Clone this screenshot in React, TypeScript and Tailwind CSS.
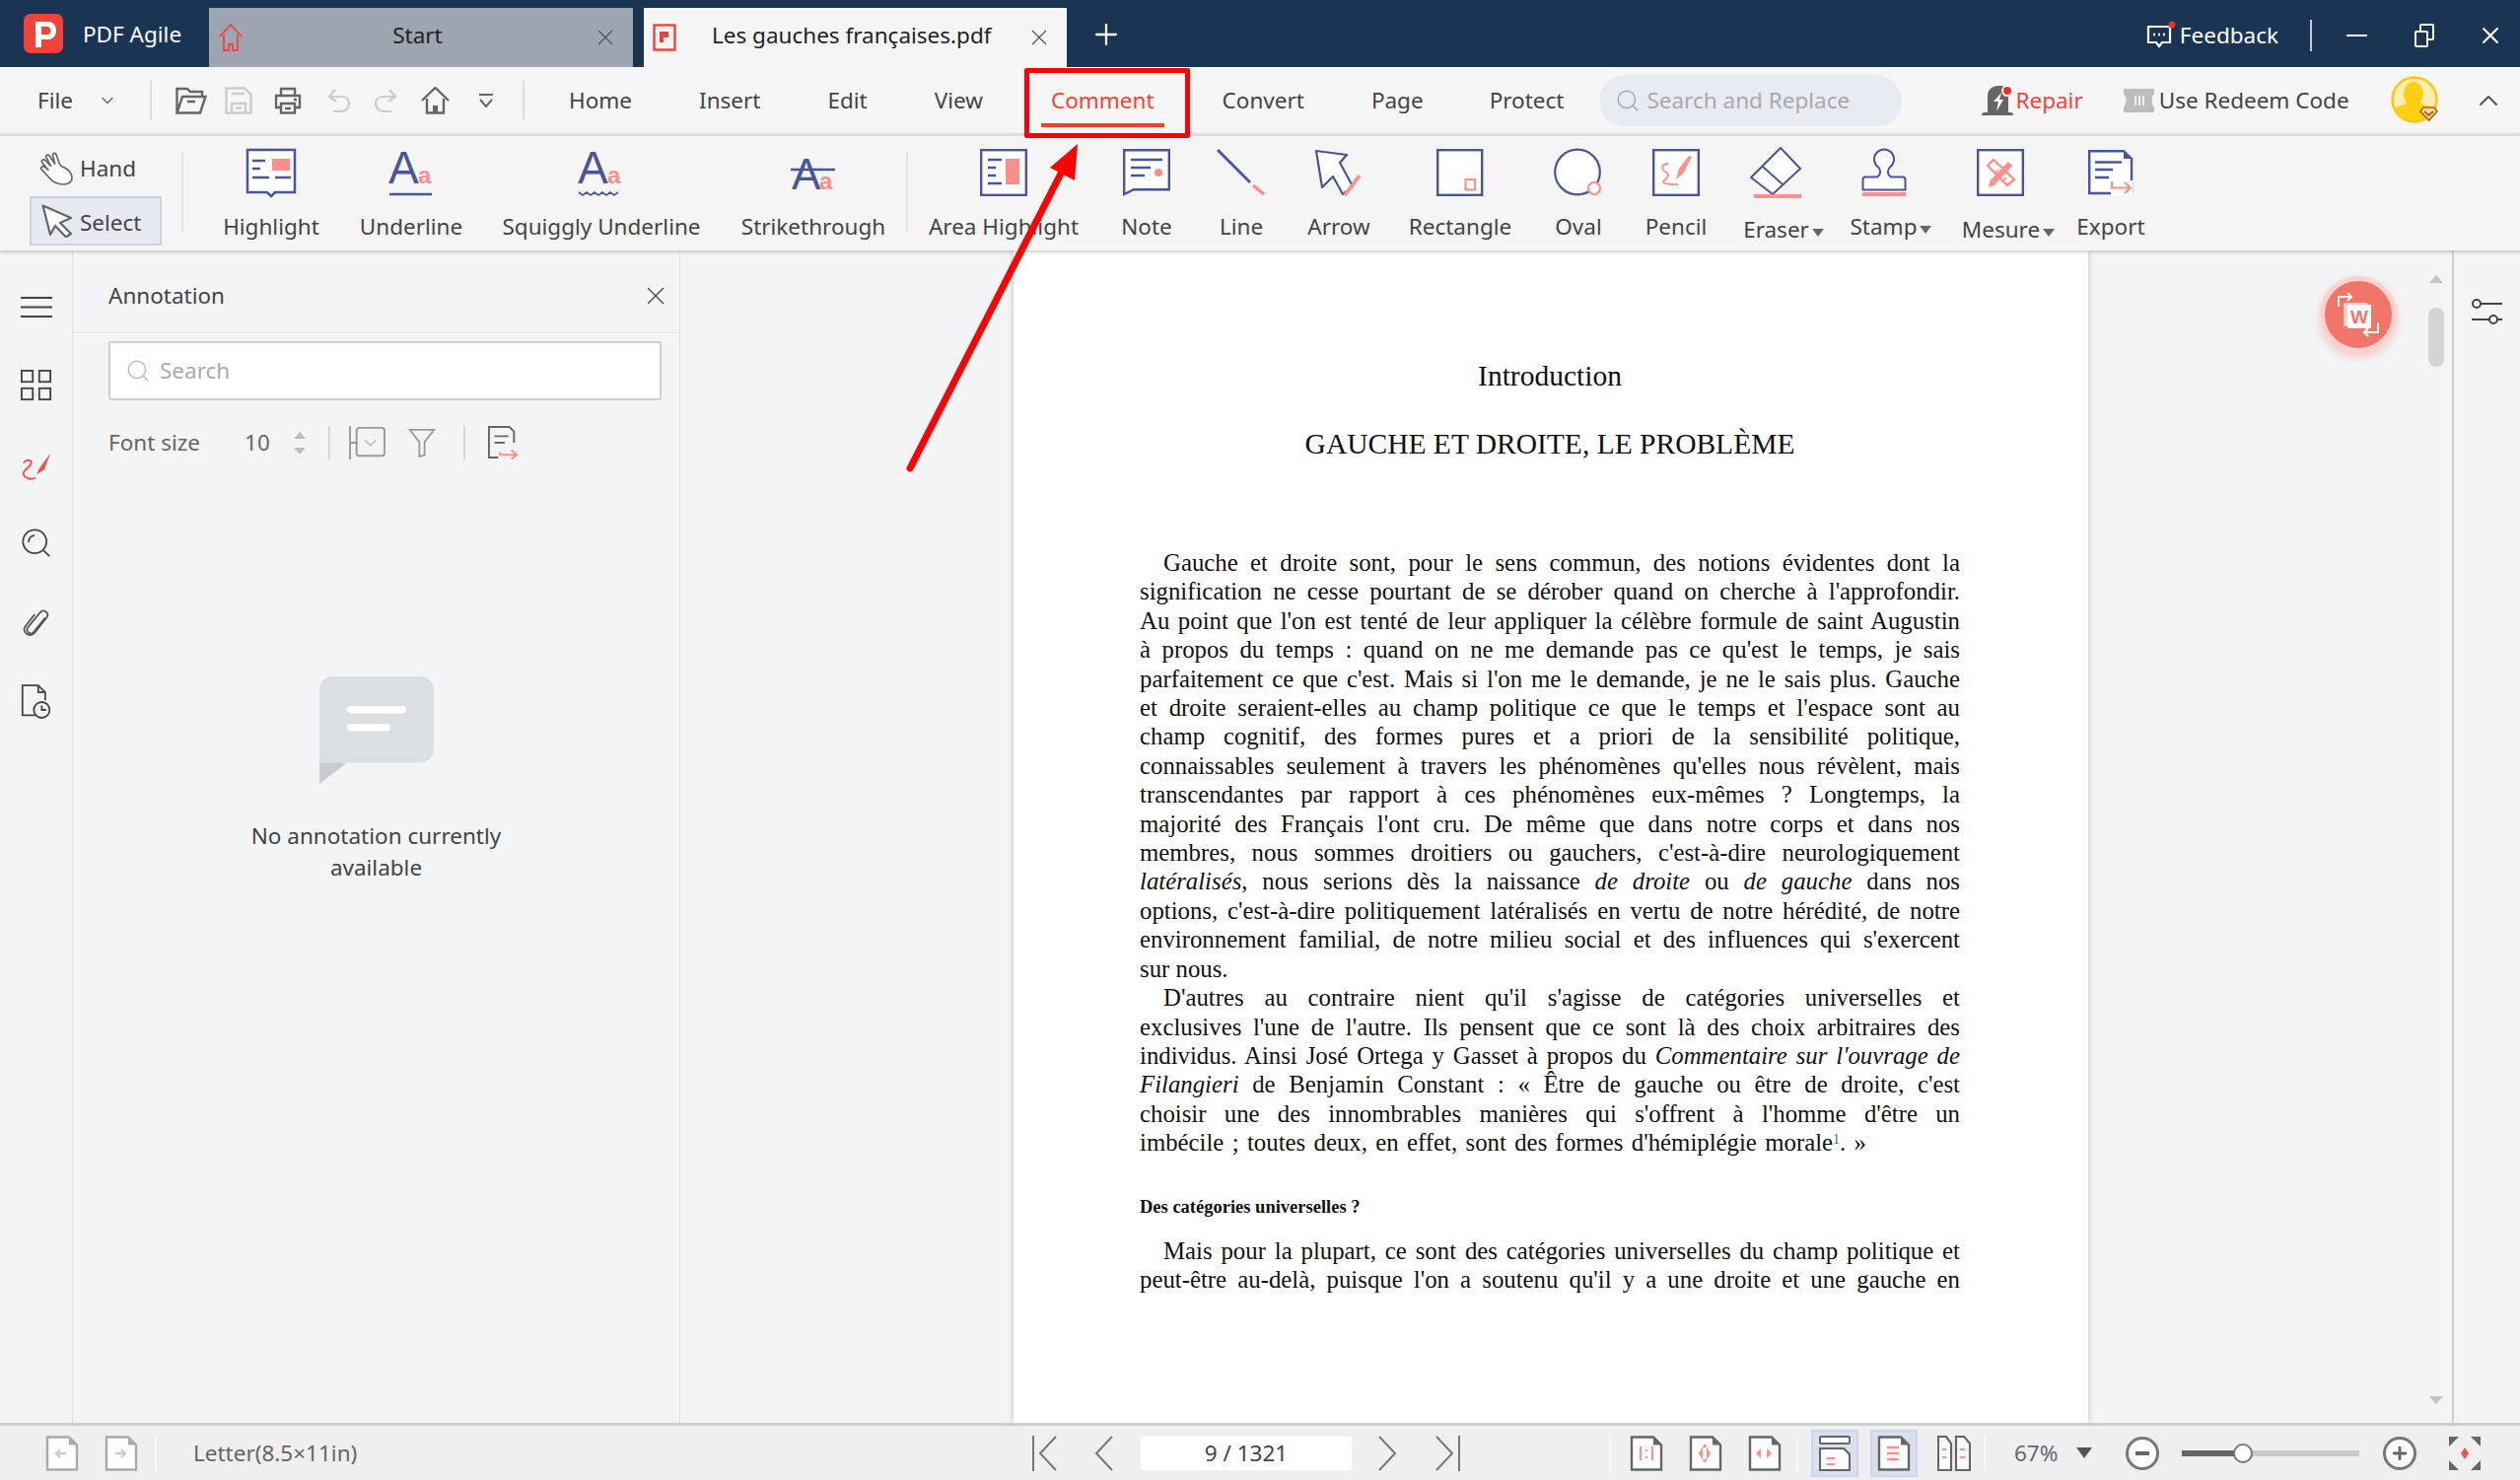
import { ChevronDown, ChevronUp, Plus, Search, X } from "lucide-react";
import type { ReactNode } from "react";

const NAVY = "#4a5596";
const PINK = "#ff8f8a";

function Svg({ w, h, children }: { w: number; h: number; children: ReactNode }) {
  return (
    <svg width={w} height={h} viewBox={`0 0 ${w} ${h}`} fill="none" className="block overflow-visible">
      {children}
    </svg>
  );
}

function LetterA({ y }: { y: number }) {
  return (
    <>
      <text x="0" y={y} fontFamily="Liberation Sans" fontSize="46" fill={NAVY}>A</text>
      <text x="30" y={y} fontFamily="Liberation Sans" fontWeight="700" fontSize="24" fill={PINK}>a</text>
    </>
  );
}

const toolIcons: Record<string, ReactNode> = {
  Highlight: (
    <Svg w={52} h={50}>
      <path d="M2 2h48v43H30l-4 4-4-4H2z" stroke={NAVY} strokeWidth="2.5" fill="#fff" />
      <path d="M7 13h13M7 21h8M7 30h17M30 30h16" stroke={NAVY} strokeWidth="2.5" />
      <rect x="27" y="11" width="18" height="12" fill={PINK} />
    </Svg>
  ),
  Underline: (
    <Svg w={46} h={48}>
      <LetterA y={35} />
      <path d="M1 46h43" stroke={NAVY} strokeWidth="2.5" />
    </Svg>
  ),
  "Squiggly Underline": (
    <Svg w={48} h={48}>
      <LetterA y={35} />
      <path d="M1 44l4 3 4-3 4 3 4-3 4 3 4-3 4 3 4-3 4 3 4-3" stroke={NAVY} strokeWidth="1.6" />
    </Svg>
  ),
  Strikethrough: (
    <Svg w={46} h={48}>
      <text x="1" y="41" fontFamily="Liberation Sans" fontSize="44" fill={NAVY}>A</text>
      <text x="29" y="41" fontFamily="Liberation Sans" fontWeight="700" fontSize="24" fill={PINK}>a</text>
      <path d="M0 21h45" stroke={NAVY} strokeWidth="2.5" />
    </Svg>
  ),
  "Area Highlight": (
    <Svg w={48} h={48}>
      <rect x="1.2" y="1.2" width="45.6" height="45.6" stroke={NAVY} strokeWidth="2.4" fill="#fff" />
      <path d="M8 11h14M8 19h8M8 27h8M8 35h14" stroke={NAVY} strokeWidth="2.4" />
      <rect x="26" y="10" width="14" height="26" fill={PINK} />
    </Svg>
  ),
  Note: (
    <Svg w={48} h={48}>
      <path d="M1.2 1.2h45.6v40H11L1.2 46z" stroke={NAVY} strokeWidth="2.4" fill="#fff" />
      <path d="M8 11h32M8 19h20M8 27h14" stroke={NAVY} strokeWidth="2.4" />
      <circle cx="36" cy="24" r="4" fill={PINK} />
    </Svg>
  ),
  Line: (
    <Svg w={50} h={48}>
      <path d="M1 1l33 33" stroke={NAVY} strokeWidth="2.8" />
      <path d="M37 37l11 9" stroke={PINK} strokeWidth="3.4" />
    </Svg>
  ),
  Arrow: (
    <Svg w={50} h={48}>
      <path d="M2 2l31 4-7 8 13 24-10 8-10-18-11 11z" stroke={NAVY} strokeWidth="2.2" strokeLinejoin="round" fill="#fff" />
      <path d="M31 47l15-20" stroke={PINK} strokeWidth="3.6" />
    </Svg>
  ),
  Rectangle: (
    <Svg w={48} h={48}>
      <rect x="1.2" y="1.2" width="45" height="45.6" stroke={NAVY} strokeWidth="2.4" fill="#fff" />
      <rect x="29.5" y="31" width="9.5" height="10.5" stroke={PINK} strokeWidth="2.2" />
    </Svg>
  ),
  Oval: (
    <Svg w={50} h={50}>
      <circle cx="24" cy="24.5" r="22.8" stroke={NAVY} strokeWidth="2.2" fill="#fff" />
      <circle cx="41" cy="41" r="6" stroke={PINK} strokeWidth="2.2" fill="#fff" />
    </Svg>
  ),
  Pencil: (
    <Svg w={48} h={48}>
      <rect x="1.2" y="1.2" width="45.6" height="45.6" stroke={NAVY} strokeWidth="2.4" fill="#fff" />
      <path d="M16 15C9 15 9 21 13 23c5 3 3 6-1 9-3 3 2 4 14 4" stroke={PINK} strokeWidth="1.8" />
      <path d="M24 31l7-6 9-17-3-1-10 13z" fill={PINK} />
    </Svg>
  ),
  Eraser: (
    <Svg w={52} h={52}>
      <path d="M31 1l20 21-28 26L1 31z" stroke={NAVY} strokeWidth="2" strokeLinejoin="round" fill="#fff" />
      <path d="M13 20l20 18" stroke={NAVY} strokeWidth="2" />
      <rect x="4" y="48" width="48" height="4" fill={PINK} />
    </Svg>
  ),
  Stamp: (
    <Svg w={44} h={48}>
      <path d="M16 18.500A10 10 0 1 1 28 18.500C25 21 25 26 29 28.500H41Q43.500 28.500 43.500 31V41.500H.5V31Q.5 28.500 3 28.500H15C19 26 19 21 16 18.500Z" stroke={NAVY} strokeWidth="2" fill="#fff" />
      <rect x="0" y="44" width="44" height="4" fill={PINK} />
    </Svg>
  ),
  Mesure: (
    <Svg w={48} h={48}>
      <rect x="1.2" y="1.2" width="45.6" height="45.600" stroke={NAVY} strokeWidth="2.4" fill="#fff" />
      <path d="M17 11l21 20-7 6L11 17z" stroke={PINK} strokeWidth="2.4" fill="#fff" />
      <path d="M19 24l3-3M23 28l3-3M27 32l3-3" stroke={PINK} strokeWidth="1.6" />
      <path d="M34 15L17 33" stroke={PINK} strokeWidth="6" />
      <path d="M14 30l6 6-8 3z" fill={PINK} />
    </Svg>
  ),
  Export: (
    <Svg w={46} h={46}>
      <path d="M1.200 1.200H36L44 9v35H1.200z" stroke={NAVY} strokeWidth="2.400" fill="#fff" />
      <path d="M36 1l8 8h-8z" fill={NAVY} />
      <path d="M7 12.500h27M7 20h18M7 28h14" stroke={NAVY} strokeWidth="2.400" />
      <rect x="23" y="31" width="22" height="15" fill="#fff" />
      <path d="M24 32v6.500h19M37 33l6 5.500-6 5.500" stroke={PINK} strokeWidth="2.200" />
    </Svg>
  ),
};

const tools = [
  { name: "Highlight", w: "w-[140px]" },
  { name: "Underline", w: "w-[144px]" },
  { name: "Squiggly Underline", w: "w-[242px]" },
  { name: "Strikethrough", w: "w-[188px]" },
  { name: "sep" },
  { name: "Area Highlight", w: "w-[194px]" },
  { name: "Note", w: "w-[96px]" },
  { name: "Line", w: "w-[96px]" },
  { name: "Arrow", w: "w-[102px]" },
  { name: "Rectangle", w: "w-[144px]" },
  { name: "Oval", w: "w-[96px]" },
  { name: "Pencil", w: "w-[102px]" },
  { name: "Eraser", w: "w-[116px]", caret: true, low: true, shift: "mr-[16px]" },
  { name: "Stamp", w: "w-[102px]", caret: true, shift: "mr-[14px]" },
  { name: "Mesure", w: "w-[136px]", caret: true, low: true, shift: "mr-[16px]" },
  { name: "Export", w: "w-[72px]" },
];

function Tool({ name, w, caret, low, shift }: { name: string; w?: string; caret?: boolean; low?: boolean; shift?: string }) {
  if (name === "sep") return <div className="mt-[5px] h-[80px] w-[2px] bg-[#e4e4e4]" />;
  return (
    <div className={`${w} flex flex-col items-center`}>
      <div className={`h-[52px] flex items-center justify-center ${shift ?? ""}`}>{toolIcons[name]}</div>
      <div className={`${low ? "mt-[16px]" : "mt-[13px]"} flex items-center whitespace-nowrap text-[22.5px] leading-[32px] text-[#444]`}>
        {name}
        {caret && <span className="ml-[3px] mt-[5px] h-0 w-0 border-x-[6px] border-t-[8px] border-x-transparent border-t-[#666]" />}
      </div>
    </div>
  );
}

function PageIcon({ children, dark = true }: { children?: ReactNode; dark?: boolean }) {
  const c = dark ? "#666" : "#aaa";
  return (
    <svg width="34" height="36" viewBox="0 0 34 36" fill="none" className="block">
      <path d="M2 1.500h22l8 8v25H2z" fill="#fff" stroke={c} strokeWidth="2.400" />
      <path d="M24 1.500v8h8z" fill={c} />
      {children}
    </svg>
  );
}

function Round({ children }: { children: ReactNode }) {
  return (
    <span className="grid h-[34px] w-[34px] place-items-center rounded-full border-[3px] border-[#777] bg-white">{children}</span>
  );
}

function PaperLine({ children, last, indent }: { children: ReactNode; last?: boolean; indent?: boolean }) {
  return (
    <div className={`h-[29.42px] whitespace-nowrap ${last ? "" : "[text-align-last:justify]"} ${indent ? "pl-[24px]" : ""}`}>
      {children}
    </div>
  );
}

function RailIcon({ children, mt }: { children: ReactNode; mt: string }) {
  return <div className={`${mt} flex justify-center`}>{children}</div>;
}

export default function App() {
  return (
    <div className="relative flex h-[1501px] w-[2556px] flex-col overflow-hidden bg-[#f3f4f6] font-['Noto_Sans',sans-serif] text-[#333]">
      {/* title bar */}
      <div className="flex h-[68px] flex-none items-end bg-[#1a3553] text-white">
        <div className="flex h-[60px] w-[212px] flex-none items-start pl-[24px]">
          <svg width="40" height="40" viewBox="0 0 40 40" className="mt-[6px] block">
            <rect width="40" height="40" rx="7" fill="#f0443a" />
            <path d="M12 8h13c5 0 8 4 8 9s-3 9-8 9h-7v8h-6z" fill="#fff" />
            <path d="M18 13h6c2 0 3.500 2 3.500 4s-1.500 4-3.500 4h-6z" fill="#f0443a" />
          </svg>
          <span className="ml-[20px] mt-[7px] text-[22.5px] leading-[40px]">PDF Agile</span>
        </div>
        <div className="flex h-[60px] w-[430px] items-center bg-[#9ca5b0] pl-[10px] pr-[15px] text-[22.5px] text-[#222]">
          <svg width="24" height="30" viewBox="0 0 24 30" fill="none" stroke="#f0443a" strokeWidth="1.800">
            <path d="M1 14L12 2l11 12M5 12v16h5v-6h4v6h5V12" />
          </svg>
          <span className="flex-1 pb-[5px] text-center">Start</span>
          <X size={26} strokeWidth={1.1} className="text-[#555]" />
        </div>
        <div className="ml-[11px] flex h-[60px] w-[429px] items-center bg-[#f5f5f5] pl-[9px] pr-[15px] text-[22.5px] text-[#222]">
          <svg width="24" height="28" viewBox="0 0 24 28" fill="none">
            <rect x="1.500" y="1.500" width="21" height="25" stroke="#f0443a" strokeWidth="2.400" />
            <path d="M7 8h9v6h-5v5H7z" fill="#f0443a" />
          </svg>
          <span className="ml-[36px] flex-1 whitespace-nowrap pb-[5px]">Les gauches françaises.pdf</span>
          <X size={26} strokeWidth={1.1} className="text-[#555]" />
        </div>
        <Plus size={34} strokeWidth={1.600} className="mb-[16px] ml-[23px]" />
        <div className="mb-[12px] ml-auto flex h-[40px] items-center">
          <svg width="32" height="30" viewBox="0 0 32 30" fill="none">
            <path d="M2 6h22v16h-8l-3 4-3-4H2z" stroke="#fff" strokeWidth="2.200" />
            <path d="M7 14h2M12 14h2M17 14h2" stroke="#fff" strokeWidth="2.600" />
            <circle cx="26" cy="4" r="3.500" fill="#f0302a" />
          </svg>
          <span className="ml-[2px] text-[22.5px]">Feedback</span>
          <span className="ml-[32px] h-[32px] w-[2px] bg-[#c6ccd4]" />
          <span className="ml-[35px] h-[2px] w-[21px] bg-white" />
          <svg width="22" height="26" viewBox="0 0 22 26" fill="none" className="ml-[47px]">
            <rect x="7" y="2" width="13" height="15" rx="1" stroke="#fff" strokeWidth="2" />
            <rect x="2" y="9" width="12" height="15" rx="1" fill="#1a3553" stroke="#fff" strokeWidth="2" />
          </svg>
          <X size={28} strokeWidth={1.800} className="ml-[42px] mr-[16px]" />
        </div>
      </div>

      {/* menu bar */}
      <div className="flex h-[70px] flex-none items-center border-b-[3px] border-[#dfdfdf] bg-[#f6f6f6] text-[22.5px] text-[#444]">
        <span className="ml-[38px] w-[58px]">File</span>
        <ChevronDown size={20} className="ml-[3px] text-[#666]" strokeWidth={1.600} />
        <span className="ml-[33px] h-[40px] w-[2px] bg-[#dedede]" />
        <svg width="32" height="28" viewBox="0 0 32 28" fill="none" stroke="#666" strokeWidth="2.400" className="ml-[24px]">
          <path d="M1.500 26.500V2H12l3 3h12v5M1.500 26.500H25L30.500 10H7zM12 15h8" />
        </svg>
        <svg width="28" height="28" viewBox="0 0 28 28" fill="none" stroke="#ccc" strokeWidth="2.400" className="ml-[18px]">
          <path d="M1.500 1.500H20L26.500 8v18.500h-25zM7 7h13M7 26V17h14v9M11 21.500h6" />
        </svg>
        <svg width="28" height="28" viewBox="0 0 28 28" fill="none" stroke="#666" strokeWidth="2.400" className="ml-[22px]">
          <path d="M7 9V2h14v7M7 21H2V9h24v12h-5M7 17h14v9.500H7zM11 22h6M20 13h3" />
        </svg>
        <svg width="23" height="24" viewBox="0 0 23 24" fill="none" stroke="#ccc" strokeWidth="2.200" className="ml-[26px]">
          <path d="M8 1L2 8l7 5M3 8h11c5 0 8 3 8 7 0 5-4 8-9 8H6" />
        </svg>
        <svg width="23" height="24" viewBox="0 0 23 24" fill="none" stroke="#ccc" strokeWidth="2.200" className="ml-[25px]">
          <path d="M15 1l6 7-7 5M20 8H9C4 8 1 11 1 15c0 5 4 8 9 8h7" />
        </svg>
        <svg width="29" height="28" viewBox="0 0 29 28" fill="none" stroke="#666" strokeWidth="2.400" className="ml-[24px]">
          <path d="M1 14L14.500 1 28 14M6 12v14.500h17V12" />
          <rect x="12" y="19" width="5" height="7" fill="#666" stroke="none" />
        </svg>
        <svg width="14" height="14" viewBox="0 0 14 14" fill="none" stroke="#666" strokeWidth="2" className="ml-[30px]">
          <path d="M0 1h14M1 6l6 7 6-7" />
        </svg>
        <span className="ml-[30px] h-[40px] w-[2px] bg-[#dedede]" />
        <span className="ml-[45px]">Home</span>
        <span className="ml-[68px]">Insert</span>
        <span className="ml-[68px]">Edit</span>
        <span className="ml-[68px]">View</span>
        <span className="relative ml-[69px] text-[#f04438]">
          Comment
          <span className="absolute bottom-[-11px] left-[-10px] right-[-10px] h-[4px] bg-[#ee4035]" />
        </span>
        <span className="ml-[69px]">Convert</span>
        <span className="ml-[68px]">Page</span>
        <span className="ml-[67px]">Protect</span>
        <div className="ml-[36px] flex h-[52px] w-[307px] items-center rounded-[26px] bg-[#e9ebf2] pl-[16px] text-[#a9a9a9]">
          <Search size={26} strokeWidth={1.400} />
          <span className="ml-[6px]">Search and Replace</span>
        </div>
        <svg width="32" height="32" viewBox="0 0 32 32" className="ml-[81px]">
          <path d="M6 28V12C6 5 10 1 17 1h4c4 0 6 4 6 11v16h2q3 0 3 3H0q0-3 3-3z" fill="#666" />
          <path d="M20 8l-8 9h5l-2 10 7-12h-4z" fill="#fff" />
          <circle cx="26" cy="6" r="6" fill="#f6f6f6" />
          <circle cx="26" cy="6" r="4" fill="#e8302a" />
        </svg>
        <span className="ml-[2px] text-[#f0443a]">Repair</span>
        <svg width="31" height="24" viewBox="0 0 31 24" className="ml-[41px]">
          <path d="M0 0h31v5q-5 7 0 14v5H0v-5q5-7 0-14z" fill="#bdbdbd" />
          <path d="M12 7v10M16 7v10M20 7v10" stroke="#f6f6f6" strokeWidth="1.800" />
        </svg>
        <span className="ml-[5px] whitespace-nowrap">Use Redeem Code</span>
        <svg width="50" height="50" viewBox="0 0 50 50" className="ml-[42px] flex-none">
          <circle cx="24" cy="24" r="22.500" fill="#ffeeb0" stroke="#ffc60b" strokeWidth="2.500" />
          <ellipse cx="23" cy="18" rx="10" ry="12" fill="#ffd011" />
          <path d="M3 33c6-3 13-4 15-8h10c2 4 9 5 17 8-4 8-12 13-21 13S7 41 3 33z" fill="#ffd011" />
          <path d="M30 36l3-4h11l3 4-8.500 9z" fill="#ffd98c" stroke="#a8621a" strokeWidth="1.600" />
          <path d="M34 36l4.500 4 4.500-4" fill="none" stroke="#a8621a" strokeWidth="1.800" />
        </svg>
        <ChevronUp size={32} strokeWidth={1.500} className="ml-[33px] text-[#555]" />
      </div>

      {/* ribbon */}
      <div className="relative z-10 flex h-[116px] flex-none items-start bg-[#f5f5f5] pt-[11px] shadow-[0_2px_3px_rgba(0,0,0,0.18)]">
        <div className="ml-[30px] flex w-[134px] flex-none flex-col text-[22.5px] text-[#444]">
          <div className="flex h-[48px] items-center pb-[4px] pl-[10px]">
            <svg width="34" height="34" viewBox="0 0 100 100" fill="#fff" stroke="#666" strokeWidth="5" strokeLinejoin="round">
              <path d="M70 97C50 97 40 90 30 78L6 52c-4-6 4-12 10-6l10 8L8 32c-4-6 4-12 10-6l16 16-14-26c-2-6 6-10 10-4l16 24-6-26c-2-6 8-8 10-2l10 28c4 10 12 8 20 14 12 8 20 22 16 34-4 8-14 13-26 13z" />
            </svg>
            <span className="ml-[7px]">Hand</span>
          </div>
          <div className="mt-[2px] flex h-[50px] items-center border-2 border-[#cdd3e2] bg-[#e8eaf2] pl-[10px]">
            <svg width="32" height="34" viewBox="0 0 32 34" fill="#fff" stroke="#666" strokeWidth="2.200" strokeLinejoin="round">
              <path d="M1.500 1.500L30 14l-11 5 11 11-5 3.500L14 22l-5 9z" />
            </svg>
            <span className="ml-[7px] mt-[4px]">Select</span>
          </div>
        </div>
        <div className="ml-[20px] mt-[5px] h-[80px] w-[2px] bg-[#e4e4e4]" />
        <div className="ml-[19px] flex h-full items-start">
          {tools.map((t) => (
            <Tool key={t.name} {...t} />
          ))}
        </div>
      </div>

      {/* body */}
      <div className="flex min-h-0 flex-1">
        <div className="flex w-[74px] flex-none flex-col border-r border-[#dddfe2]">
          <RailIcon mt="mt-[47px]">
            <svg width="32" height="21" viewBox="0 0 32 21" fill="none"><path d="M0 1h32M0 10.500h32M0 20h32" stroke="#444" strokeWidth="2" /></svg>
          </RailIcon>
          <RailIcon mt="mt-[53px]">
            <svg width="32" height="32" viewBox="0 0 34 34" fill="none" stroke="#444" strokeWidth="2">
              <rect x="1" y="1" width="12" height="12" /><rect x="20" y="1" width="12" height="12" /><rect x="1" y="20" width="12" height="12" /><rect x="20" y="20" width="12" height="12" />
            </svg>
          </RailIcon>
          <RailIcon mt="mt-[51px]">
            <svg width="32" height="30" viewBox="0 0 34 34" fill="none" stroke="#f0554a" strokeWidth="2.200">
              <path d="M2 13c3-4 9-4 9 0 0 4-9 8-9 12 0 6 10 8 14 5" />
              <path d="M17 26l4-8 12-16-7 19z" fill="#f0554a" stroke="none" />
            </svg>
          </RailIcon>
          <RailIcon mt="mt-[48px]">
            <svg width="32" height="30" viewBox="0 0 34 34" fill="none" stroke="#444" strokeWidth="2">
              <circle cx="15" cy="15" r="13.500" /><path d="M25 25l7 7M8 16c0-5 3-8 7-8" />
            </svg>
          </RailIcon>
          <RailIcon mt="mt-[50px]">
            <svg width="28" height="32" viewBox="0 0 30 36" fill="none" stroke="#555" strokeWidth="2">
              <path d="M25 12L12 28c-3 4-10 0-7-5L19 6c4-5 11 0 8 5L13 29c-5 6-15 0-11-7L13 8" />
            </svg>
          </RailIcon>
          <RailIcon mt="mt-[46px]">
            <svg width="32" height="36" viewBox="0 0 36 40" fill="none" stroke="#444" strokeWidth="2">
              <path d="M17 35H2V1h18l8 8v9M20 1v8h8" />
              <circle cx="24" cy="29" r="9" /><path d="M24 24v5h5" />
            </svg>
          </RailIcon>
        </div>

        <div className="flex w-[616px] flex-none flex-col border-r border-[#dddfe2]">
          <div className="flex h-[84px] flex-none items-center justify-between border-b border-[#e8e9eb] pl-[36px] pr-[9px] pt-[8px]">
            <span className="text-[22.5px] text-[#444]">Annotation</span>
            <X size={30} strokeWidth={1} className="text-[#444]" />
          </div>
          <div className="ml-[36px] mt-[8px] flex h-[60px] w-[561px] items-center rounded-[3px] border-2 border-[#cfcfcf] bg-white pl-[15px] text-[22.5px] text-[#aaa]">
            <Search size={26} strokeWidth={1.300} className="text-[#bbb]" />
            <span className="ml-[9px]">Search</span>
          </div>
          <div className="ml-[36px] mt-[24px] flex h-[38px] items-center text-[22.5px] text-[#666]">
            <span>Font size</span>
            <span className="ml-[45px]">10</span>
            <span className="ml-[24px] flex flex-col items-center gap-[9px]">
              <span className="h-0 w-0 border-x-[6px] border-b-[7px] border-x-transparent border-b-[#bdbdbd]" />
              <span className="h-0 w-0 border-x-[6px] border-t-[7px] border-x-transparent border-t-[#bdbdbd]" />
            </span>
            <span className="ml-[23px] h-[34px] w-[2px] bg-[#d6d6d6]" />
            <svg width="40" height="34" viewBox="0 0 40 36" fill="none" stroke="#999" strokeWidth="2" className="ml-[18px]">
              <path d="M1 0v36M1 18h8" /><rect x="8" y="2" width="30" height="30" rx="3" /><path d="M17 15l6 6 6-6" stroke="#c4c4c4" />
            </svg>
            <svg width="30" height="30" viewBox="0 0 32 34" fill="none" stroke="#999" strokeWidth="2" className="ml-[20px]">
              <path d="M2 2h28L19 16v15l-6 2V16z" />
            </svg>
            <span className="ml-[27px] h-[34px] w-[2px] bg-[#d6d6d6]" />
            <svg width="32" height="34" viewBox="0 0 34 36" fill="none" stroke="#666" strokeWidth="2" className="ml-[23px]">
              <path d="M11 34H1V1h22l5 5v12M7 11h15M7 18h11" />
              <path d="M13 28v3h17M25 26l6 5-6 5" stroke="#ff8f8a" />
            </svg>
          </div>
          <div className="mt-[218px] flex flex-col items-center">
            <svg width="116" height="109" viewBox="0 0 116 116" preserveAspectRatio="none">
              <path d="M14 0h88c8 0 14 6 14 14v65c0 8-6 14-14 14H0V14C0 6 6 0 14 0z" fill="#dcdfe2" />
              <path d="M0 93h28L0 116z" fill="#c9cbd0" />
              <rect x="28" y="32" width="60" height="8" rx="4" fill="#fff" />
              <rect x="28" y="51" width="44" height="8" rx="4" fill="#fff" />
            </svg>
            <p className="mt-[37px] text-center text-[22.5px] leading-[32px] text-[#444]">
              No annotation currently
              <br />
              available
            </p>
          </div>
        </div>

        <div className="min-w-0 flex-1 pl-[338px]">
          <div className="h-full w-[1090px] bg-white pl-[128px] pr-[130px] font-['Liberation_Serif',serif] text-[24.8px] leading-[29.42px] text-[#111] shadow-[0_0_6px_rgba(0,0,0,0.22)]">
            <p className="pt-[107px] text-center text-[29.5px] leading-[40px]">Introduction</p>
            <p className="mt-[29px] text-center text-[29.5px] leading-[40px]">GAUCHE ET DROITE, LE PROBLÈME</p>
            <div className="mt-[86px]">
              <PaperLine indent>Gauche et droite sont, pour le sens commun, des notions évidentes dont la</PaperLine>
              <PaperLine>signification ne cesse pourtant de se dérober quand on cherche à l'approfondir.</PaperLine>
              <PaperLine>Au point que l'on est tenté de leur appliquer la célèbre formule de saint Augustin</PaperLine>
              <PaperLine>à propos du temps : quand on ne me demande pas ce qu'est le temps, je sais</PaperLine>
              <PaperLine>parfaitement ce que c'est. Mais si l'on me le demande, je ne le sais plus. Gauche</PaperLine>
              <PaperLine>et droite seraient-elles au champ politique ce que le temps et l'espace sont au</PaperLine>
              <PaperLine>champ cognitif, des formes pures et a priori de la sensibilité politique,</PaperLine>
              <PaperLine>connaissables seulement à travers les phénomènes qu'elles nous révèlent, mais</PaperLine>
              <PaperLine>transcendantes par rapport à ces phénomènes eux-mêmes ? Longtemps, la</PaperLine>
              <PaperLine>majorité des Français l'ont cru. De même que dans notre corps et dans nos</PaperLine>
              <PaperLine>membres, nous sommes droitiers ou gauchers, c'est-à-dire neurologiquement</PaperLine>
              <PaperLine><i>latéralisés</i>, nous serions dès la naissance <i>de droite</i> ou <i>de gauche</i> dans nos</PaperLine>
              <PaperLine>options, c'est-à-dire politiquement latéralisés en vertu de notre hérédité, de notre</PaperLine>
              <PaperLine>environnement familial, de notre milieu social et des influences qui s'exercent</PaperLine>
              <PaperLine last>sur nous.</PaperLine>
              <PaperLine indent>D'autres au contraire nient qu'il s'agisse de catégories universelles et</PaperLine>
              <PaperLine>exclusives l'une de l'autre. Ils pensent que ce sont là des choix arbitraires des</PaperLine>
              <PaperLine>individus. Ainsi José Ortega y Gasset à propos du <i>Commentaire sur l'ouvrage de</i></PaperLine>
              <PaperLine><i>Filangieri</i> de Benjamin Constant : « Être de gauche ou être de droite, c'est</PaperLine>
              <PaperLine>choisir une des innombrables manières qui s'offrent à l'homme d'être un</PaperLine>
              <div className="h-[29.42px] w-[737px] whitespace-nowrap [text-align-last:justify]">
                imbécile ; toutes deux, en effet, sont des formes d'hémiplégie morale<sup className="text-[14px] leading-none text-[#3b5fc0]">1</sup>. »
              </div>
            </div>
            <p className="mt-[36px] text-[18.5px] font-bold leading-[29px]">Des catégories universelles ?</p>
            <div className="mt-[15px]">
              <PaperLine indent>Mais pour la plupart, ce sont des catégories universelles du champ politique et</PaperLine>
              <PaperLine>peut-être au-delà, puisque l'on a soutenu qu'il y a une droite et une gauche en</PaperLine>
            </div>
          </div>
        </div>

        <div className="relative w-[369px] flex-none">
          <div className="absolute left-[346px] top-[25px] h-0 w-0 border-x-[7px] border-b-[8px] border-x-transparent border-b-[#c4c4c4]" />
          <div className="absolute left-[345px] top-[58px] h-[60px] w-[16px] rounded-[8px] bg-[#d4d4d2]" />
          <div className="absolute bottom-[19px] left-[346px] h-0 w-0 border-x-[7px] border-t-[8px] border-x-transparent border-t-[#c4c4c4]" />
          <div className="absolute left-[235px] top-[26px] grid h-[78px] w-[78px] place-items-center rounded-full border-[5px] border-[#ffd2ce] bg-[#f2756a] shadow-[0_4px_8px_rgba(240,117,106,0.35)]">
            <svg width="44" height="46" viewBox="0 0 44 46" fill="none">
              <path d="M2 15V5h13M11 1l4 4-4 4M42 31v10H28M32 37l-4 4 4 4" stroke="#fff" strokeWidth="2" />
              <rect x="7" y="11" width="24" height="24" fill="#ffcfca" />
              <rect x="11" y="13" width="24" height="24" fill="#fff" />
              <text x="14" y="32" fontFamily="Liberation Sans" fontWeight="700" fontSize="19" fill="#f2756a">W</text>
            </svg>
          </div>
        </div>
        <div className="flex w-[69px] flex-none justify-center border-l-2 border-[#cfd0d2] pt-[49px]">
          <svg width="34" height="30" viewBox="0 0 34 30" fill="none" stroke="#444" strokeWidth="2">
            <circle cx="6" cy="5" r="4" /><path d="M10 5h22M1 21h22" /><circle cx="23" cy="21" r="4" fill="#f3f4f6" /><path d="M27 21h5" />
          </svg>
        </div>
      </div>

      {/* status bar */}
      <div className="relative z-10 flex h-[58px] flex-none items-center border-t-[3px] border-[#cdcdcd] bg-[#efefef] text-[22.5px] text-[#666]">
        <span className="ml-[46px]">
          <PageIcon dark={false}><path d="M21 18H11M15 14l-4 4 4 4" stroke="#ccc" strokeWidth="2.400" /></PageIcon>
        </span>
        <span className="ml-[26px]">
          <PageIcon dark={false}><path d="M11 18h10M17 14l4 4-4 4" stroke="#ccc" strokeWidth="2.400" /></PageIcon>
        </span>
        <span className="ml-[17px] h-[36px] w-[2px] bg-[#f8f8f8]" />
        <span className="ml-[37px] w-[850px]">Letter(8.5×11in)</span>
        <svg width="26" height="36" viewBox="0 0 26 36" fill="none" stroke="#777" strokeWidth="2"><path d="M2 0v36M25 1L9 18l16 17" /></svg>
        <svg width="20" height="36" viewBox="0 0 20 36" fill="none" stroke="#777" strokeWidth="2" className="ml-[38px]"><path d="M18 1L2 18l16 17" /></svg>
        <div className="ml-[27px] flex h-[34px] w-[214px] items-center justify-center bg-white text-[#444]">9 / 1321</div>
        <svg width="20" height="36" viewBox="0 0 20 36" fill="none" stroke="#777" strokeWidth="2" className="ml-[26px]"><path d="M2 1l16 17L2 35" /></svg>
        <svg width="26" height="36" viewBox="0 0 26 36" fill="none" stroke="#777" strokeWidth="2" className="ml-[39px]"><path d="M24 0v36M1 1l16 17L1 35" /></svg>
        <span className="ml-[150px] h-[36px] w-[2px] bg-[#f8f8f8]" />
        <span className="ml-[19px]"><PageIcon><path d="M11 11v14M17 14v2M17 21v2M23 11v14" stroke={PINK} strokeWidth="2.200" /></PageIcon></span>
        <span className="ml-[26px]"><PageIcon><path d="M16 8l6 10-6 10-6-10z" fill={PINK} /><path d="M16 12v12" stroke="#fff" strokeWidth="4" /></PageIcon></span>
        <span className="ml-[26px]"><PageIcon><path d="M13 13l-5 5 5 5zM19 13l5 5-5 5z" fill={PINK} /></PageIcon></span>
        <span className="ml-[15px] h-[36px] w-[2px] bg-[#f8f8f8]" />
        <span className="ml-[13px] flex h-[48px] w-[48px] flex-col items-center justify-center gap-[3px] border-2 border-[#cdd5e6] bg-[#d9dfec]">
          <span className="h-[9px] w-[32px] rounded-[2px] border-2 border-[#666] bg-white" />
          <svg width="32" height="24" viewBox="0 0 32 24" fill="#fff" stroke="#666" strokeWidth="2.200"><path d="M1 1h24l6 6v16H1z" /><path d="M8 11h8M8 17h8" stroke={PINK} /></svg>
        </span>
        <span className="ml-[12px] grid h-[48px] w-[48px] place-items-center border-2 border-[#cdd5e6] bg-[#d9dfec]">
          <PageIcon><path d="M10 12h12M10 18h12M10 24h12" stroke={PINK} strokeWidth="2.400" /></PageIcon>
        </span>
        <svg width="34" height="36" viewBox="0 0 34 36" fill="#fff" stroke="#666" strokeWidth="2.200" className="ml-[20px]">
          <path d="M1 1h8l5 7v27H1zM19 1h8l6 7v27H19z" />
          <path d="M5 14h4M5 22h4M23 14h5M23 22h5" stroke={PINK} />
        </svg>
        <span className="ml-[13px] h-[36px] w-[2px] bg-[#f8f8f8]" />
        <span className="ml-[29px] text-[#667]">67%</span>
        <span className="ml-[19px] h-0 w-0 border-x-[8px] border-t-[11px] border-x-transparent border-t-[#555]" />
        <span className="ml-[34px]"><Round><span className="h-[4px] w-[14px] bg-[#666]" /></Round></span>
        <div className="relative ml-[23px] flex h-[6px] w-[180px] bg-[#cacaca]">
          <div className="w-[61px] bg-[#666]" />
          <span className="absolute left-[52px] top-[-7px] h-[20px] w-[20px] rounded-full border-2 border-[#777] bg-white" />
        </div>
        <span className="ml-[24px]"><Round><Plus size={20} strokeWidth={3.500} className="text-[#666]" /></Round></span>
        <svg width="32" height="34" viewBox="0 0 32 34" className="ml-[33px]">
          <path d="M0 0h10L0 10zM32 0H22l10 10zM0 34h10L0 24zM32 34H22l10-10z" fill="#666" />
          <path d="M16 11l4 6-4 6-4-6z" fill="#f0554a" />
        </svg>
      </div>

      {/* callout over the screenshot */}
      <div className="absolute left-[1039px] top-[69px] z-20 h-[71px] w-[168px] rounded-[2px] border-[5px] border-[#ff0000]" />
      <svg width="2556" height="1501" viewBox="0 0 2556 1501" className="pointer-events-none absolute left-0 top-0 z-20">
        <path d="M923 475L1076 176" stroke="#ff0000" strokeWidth="7" strokeLinecap="round" />
        <path d="M1093 146L1065 170L1090 183z" fill="#ff0000" />
      </svg>
    </div>
  );
}
